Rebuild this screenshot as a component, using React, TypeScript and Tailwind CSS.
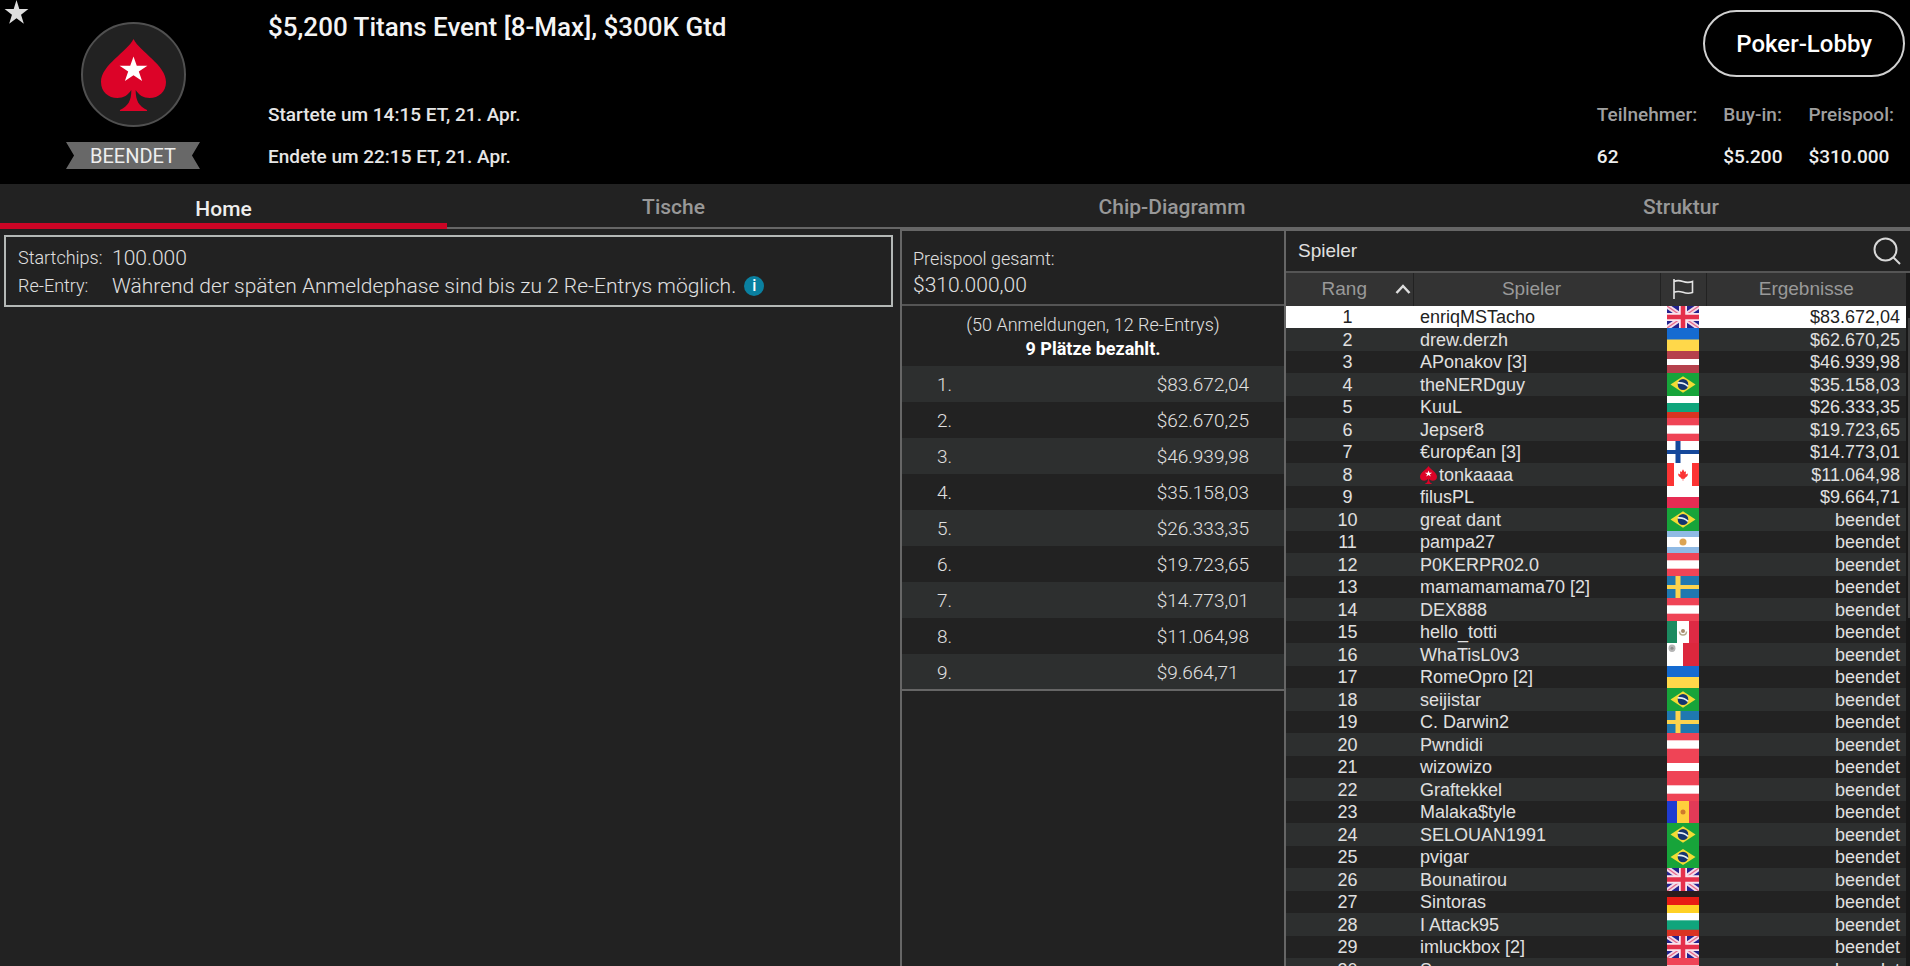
import React from 'react';

type FlagCode = 'gb' | 'ua' | 'lv' | 'br' | 'bg' | 'at' | 'fi' | 'ca' | 'pl' | 'ar' | 'se' | 'mx' | 'mt' | 'md' | 'de'

interface Player {
    name: string
    flag: FlagCode
    result?: string
    pro?: boolean
}

const Prizes = [
    '$83.672,04',
    '$62.670,25',
    '$46.939,98',
    '$35.158,03',
    '$26.333,35',
    '$19.723,65',
    '$14.773,01',
    '$11.064,98',
    '$9.664,71',
]

const Players: Player[] = [
    {name: 'enriqMSTacho', flag: 'gb', result: '$83.672,04'},
    {name: 'drew.derzh', flag: 'ua', result: '$62.670,25'},
    {name: 'APonakov [3]', flag: 'lv', result: '$46.939,98'},
    {name: 'theNERDguy', flag: 'br', result: '$35.158,03'},
    {name: 'KuuL', flag: 'bg', result: '$26.333,35'},
    {name: 'Jepser8', flag: 'at', result: '$19.723,65'},
    {name: '€urop€an [3]', flag: 'fi', result: '$14.773,01'},
    {name: 'tonkaaaa', flag: 'ca', result: '$11.064,98', pro: true},
    {name: 'filusPL', flag: 'pl', result: '$9.664,71'},
    {name: 'great dant', flag: 'br'},
    {name: 'pampa27', flag: 'ar'},
    {name: 'P0KERPR02.0', flag: 'at'},
    {name: 'mamamamama70 [2]', flag: 'se'},
    {name: 'DEX888', flag: 'at'},
    {name: 'hello_totti', flag: 'mx'},
    {name: 'WhaTisL0v3', flag: 'mt'},
    {name: 'RomeOpro [2]', flag: 'ua'},
    {name: 'seijistar', flag: 'br'},
    {name: 'C. Darwin2', flag: 'se'},
    {name: 'Pwndidi', flag: 'at'},
    {name: 'wizowizo', flag: 'at'},
    {name: 'Graftekkel', flag: 'at'},
    {name: 'Malaka$tyle', flag: 'md'},
    {name: 'SELOUAN1991', flag: 'br'},
    {name: 'pvigar', flag: 'br'},
    {name: 'Bounatirou', flag: 'gb'},
    {name: 'Sintoras', flag: 'de'},
    {name: 'I Attack95', flag: 'bg'},
    {name: 'imluckbox [2]', flag: 'gb'},
    {name: 'Sumon', flag: 'at'},
]

const StarPath = 'M0-1L.2245-.309L.951-.309L.363.118L.588.809L0 .382L-.588.809L-.363.118L-.951-.309L-.2245-.309Z'

const Bands = ({colors, stops}: { colors: string[], stops: number[] }) => (
    <>
        {colors.map((c, i) => (
            <rect key={i} width="32" y={stops[i]} height={22 - stops[i]} fill={c}/>
        ))}
    </>
)

const Columns = ({colors, stops}: { colors: string[], stops: number[] }) => (
    <>
        {colors.map((c, i) => (
            <rect key={i} height="22" x={stops[i]} width={32 - stops[i]} fill={c}/>
        ))}
    </>
)

const Cross = ({bg, fg}: { bg: string, fg: string }) => (
    <>
        <rect width="32" height="22" fill={bg}/>
        <path d="M8.500 0h5v22h-5zM0 9h32v4H0z" fill={fg}/>
    </>
)

// all drawn on a 32x22 field
const Flags: Record<FlagCode, React.ReactNode> = {
    gb: <>
        <rect width="32" height="22" fill="#23238f"/>
        <path d="M0 0L32 22M32 0L0 22" stroke="#f3dcea" strokeWidth="5"/>
        <path d="M0 0L32 22M32 0L0 22" stroke="#e86a8a" strokeWidth="1.300"/>
        <path d="M16 0v22M0 11h32" stroke="#f8e4ee" strokeWidth="8"/>
        <path d="M16 0v22M0 11h32" stroke="#e5304b" strokeWidth="4.500"/>
    </>,
    ua: <Bands colors={['#156bd1', '#ffd84a']} stops={[0, 11]}/>,
    lv: <Bands colors={['#b5404c', '#ffffff', '#b5404c']} stops={[0, 8, 14]}/>,
    br: <>
        <rect width="32" height="22" fill="#17a43a"/>
        <path d="M16 3L28.500 11L16 19L3.500 11Z" fill="#f2dc35"/>
        <circle cx="16" cy="11" r="5.300" fill="#15356f"/>
        <path d="M10.800 9.500Q17 8.800 21 12.800" stroke="#e8f0f4" strokeWidth="1.600" fill="none"/>
    </>,
    bg: <Bands colors={['#ffffff', '#10a57c', '#da3322']} stops={[0, 7, 16]}/>,
    at: <Bands colors={['#ef4456', '#ffffff', '#ef4456']} stops={[0, 7, 15]}/>,
    fi: <Cross bg="#ffffff" fg="#15489b"/>,
    ca: <>
        <Columns colors={['#fb3434', '#ffffff', '#fb3434']} stops={[0, 7, 25]}/>
        <path d="M16 6l1.500 2.500 1.500-.6-.3 3 2.300-.9-.6 2.400-2.800 2.200.1.700-1.400-.2v1.900h-.6v-1.900l-1.400.2.100-.7-2.800-2.200-.6-2.400 2.300.9-.3-3 1.500.6z" fill="#fb3434"/>
    </>,
    pl: <Bands colors={['#ffffff', '#e62c53']} stops={[0, 11]}/>,
    ar: <>
        <Bands colors={['#8fbae4', '#ffffff', '#8fbae4']} stops={[0, 6, 16]}/>
        <circle cx="16" cy="11" r="3.500" fill="#dba453"/>
    </>,
    se: <Cross bg="#1f78b0" fg="#fbd34e"/>,
    mx: <>
        <Columns colors={['#1c8a60', '#ffffff', '#de2a44']} stops={[0, 10, 22]}/>
        <path d="M12.500 10.500q0 3.500 3.500 3.500t3.500-3.500" stroke="#b5a88c" strokeWidth="1.500" fill="none"/>
        <circle cx="16" cy="10" r="2" fill="#a68a6c"/>
    </>,
    mt: <>
        <Columns colors={['#ffffff', '#dc273d']} stops={[0, 16]}/>
        <circle cx="5" cy="5" r="3.500" fill="#b5b5b5"/>
        <circle cx="5" cy="5" r="1.500" fill="#8d8d8d"/>
    </>,
    md: <>
        <Columns colors={['#1f3bd0', '#ffcf3c', '#e23a57']} stops={[0, 10, 22]}/>
        <circle cx="16" cy="11" r="2.500" fill="#cf7a2c"/>
    </>,
    de: <Bands colors={['#2a1c1c', '#e81c14', '#ffd124']} stops={[0, 6, 14]}/>,
}

const Spade = ({className}: { className: string }) => (
    <svg viewBox="0 0 60 72" className={className} preserveAspectRatio="none" aria-hidden="true">
        <path
            d="M30 0C24 13 0 26 0 43C0 53 7 59 15 59C21 59 25 56 28 51C28 62 25 67 17.500 71V72H42.500V71C35 67 32 62 32 51C35 56 39 59 45 59C53 59 60 53 60 43C60 26 36 13 30 0Z"
            fill="#dc0328"/>
        <path d={StarPath} transform="translate(30 31) scale(13.500)" fill="#fff"/>
    </svg>
)

const Header = () => (
    <header className="flex bg-black pb-1.5">
        <button className="self-start pl-1" aria-label="Favorit">
            <svg viewBox="-1 -1 2 1.900" className="h-[25px] w-[25px]" preserveAspectRatio="none">
                <path d={StarPath} fill="#dedede"/>
            </svg>
        </button>
        <div className="flex w-[208px] shrink-0 flex-col items-center pt-[22px]">
            <div className="flex h-[105px] w-[105px] items-center justify-center rounded-full border-2 border-[#505050] bg-[#222]">
                <Spade className="h-[72px] w-[65px]"/>
            </div>
            <span className="mt-[15px] h-[27px] w-[134px] bg-[#686868] text-center text-xl leading-7 text-[#eee] [clip-path:polygon(0_0,100%_0,94%_50%,100%_100%,0_100%,6%_50%)]">
                BEENDET
            </span>
        </div>
        <div className="grow pl-[31px] pt-2.5">
            <h1 className="text-[26px] font-medium leading-[34px] text-[#f4f4f4]">$5,200 Titans Event [8-Max], $300K Gtd</h1>
            <div className="mt-[50px] text-[19px] font-medium leading-[42px] text-[#e6e6e6]">
                <p>Startete um 14:15 ET, 21. Apr.</p>
                <p>Endete um 22:15 ET, 21. Apr.</p>
            </div>
        </div>
        <div className="flex flex-col items-end pr-[5px] pt-2.5">
            <button className="h-[67px] rounded-full border-2 border-[#d0d0d0] px-[31px] text-2xl font-medium text-white">
                Poker-Lobby
            </button>
            <dl className="mt-[17px] flex gap-[26px] pr-[11px] text-[19px] font-medium leading-[42px]">
                <div>
                    <dt className="text-[#9f9f9f]">Teilnehmer:</dt>
                    <dd className="text-[#eee]">62</dd>
                </div>
                <div>
                    <dt className="text-[#9f9f9f]">Buy-in:</dt>
                    <dd className="text-[#eee]">$5.200</dd>
                </div>
                <div>
                    <dt className="text-[#9f9f9f]">Preispool:</dt>
                    <dd className="text-[#eee]">$310.000</dd>
                </div>
            </dl>
        </div>
    </header>
)

const Tabs = () => (
    <nav className="grid h-[45px] shrink-0 grid-cols-[447fr_453fr_544fr_466fr] text-[21px] font-medium leading-7 text-[#989898]">
        <button className="border-b-6 border-[#cb0525] pt-2.5 text-[#eee]">Home</button>
        <button className="border-b-2 border-[#666] pt-0.5">Tische</button>
        <button className="border-b-2 border-[#666] pt-0.5">Chip-Diagramm</button>
        <button className="border-b-2 border-[#666] pl-2 pt-0.5">Struktur</button>
    </nav>
)

const Info = () => (
    <section className="pl-1 pr-[7px] pt-1.5">
        <dl className="grid grid-cols-[94px_1fr] border-2 border-[#b4b8b6] pb-[5px] pl-3 pt-[7px] font-light leading-7">
            <dt className="text-lg leading-7">Startchips:</dt>
            <dd className="text-[21px] leading-7">100.000</dd>
            <dt className="text-lg leading-7">Re-Entry:</dt>
            <dd className="flex items-center gap-2 text-[21px] leading-7">
                Während der späten Anmeldephase sind bis zu 2 Re-Entrys möglich.
                <button className="h-5 w-5 rounded-full bg-[#0a80a0] text-base font-medium leading-5 text-white">i</button>
            </dd>
        </dl>
    </section>
)

const PrizePool = () => (
    <section className="border-x-2 border-t-2 border-[#666] font-light">
        <div className="border-b-2 border-[#555] pb-1.5 pl-[11px] pt-3.5">
            <p className="text-lg leading-[27px]">Preispool gesamt:</p>
            <p className="text-[21px] leading-[26px]">$310.000,00</p>
        </div>
        <div className="pb-[5px] pt-[7px] text-center text-lg leading-6">
            <p>(50 Anmeldungen, 12 Re-Entrys)</p>
            <p className="font-bold text-white">9 Plätze bezahlt.</p>
        </div>
        <table className="w-full border-b-2 border-[#666] text-[19px] leading-7">
            <tbody>
            {Prizes.map((amount, i) => (
                <tr key={amount} className="h-9 odd:bg-[#2d2f2f]">
                    <td className="w-2/3 pl-[35px] pt-0.5">{i + 1}.</td>
                    <td className="pt-0.5">{amount}</td>
                </tr>
            ))}
            </tbody>
        </table>
    </section>
)

const PlayerRow = ({player, rank}: { player: Player, rank: number }) => {
    const selected = rank === 1
    const height = rank % 2 ? 'h-[22px]' : 'h-[23px]'

    return (
        <tr className={selected ? 'bg-white text-[#222]' : 'even:bg-[#2d2f2f]'}>
            <td className="pr-1 text-center">{rank}</td>
            <td className="pl-[7px]">
                <span className="flex items-center gap-0.5">
                    {player.pro && <Spade className="h-[18px] w-[17px]"/>}
                    {player.name}
                </span>
            </td>
            <td>
                <svg viewBox="0 0 32 22" preserveAspectRatio="none" className={`mx-auto block w-8 ${height}`}
                     role="img" aria-label={player.flag}>
                    {Flags[player.flag]}
                </svg>
            </td>
            <td className="pr-1.5 text-right">{player.result ?? 'beendet'}</td>
        </tr>
    )
}

const PlayerList = () => (
    <section className="flex min-h-0 flex-col overflow-hidden border-t-2 border-[#666] font-['Liberation_Sans',Arial,sans-serif]">
        <div className="flex h-[42px] shrink-0 items-center justify-between border-b-2 border-[#555] pl-3 pr-[9px] text-[19px]">
            <h2>Spieler</h2>
            <button aria-label="Suchen">
                <svg viewBox="0 0 28 28" className="h-7 w-7" fill="none" stroke="#d8d8d8" strokeWidth="2">
                    <circle cx="12.500" cy="12.500" r="11"/>
                    <path d="M20 20L27 27"/>
                </svg>
            </button>
        </div>
        <div className="flex min-h-0 grow">
            <table className="w-full table-fixed self-start text-lg leading-[22px]">
                <colgroup>
                    <col className="w-[127px]"/>
                    <col/>
                    <col className="w-[46px]"/>
                    <col className="w-[200px]"/>
                </colgroup>
                <thead>
                <tr className="h-[33px] bg-[#333] text-[19px] text-[#999]">
                    <th className="border-r border-[#222] pb-0.5 font-normal">
                        <button className="flex w-full items-center pl-2 pr-0.5">
                            <span className="grow">Rang</span>
                            <svg viewBox="0 0 16 10" className="h-2.5 w-4" fill="none" stroke="#ddd" strokeWidth="2.500">
                                <path d="M1.500 9L8 2L14.500 9"/>
                            </svg>
                        </button>
                    </th>
                    <th className="border-r border-[#222] pb-0.5 pr-2.5 font-normal">Spieler</th>
                    <th className="border-r border-[#222] pb-0.5">
                        <svg viewBox="0 0 22 20" className="mx-auto h-5 w-[22px]" fill="none" stroke="#e4e4e4" strokeWidth="1.600" role="img" aria-label="Land">
                            <path d="M2 0V20M2 2.500Q6 .8 11 2.500T20.500 2.500V13.500Q16 15 11 13.300T2 13.300"/>
                        </svg>
                    </th>
                    <th className="pb-0.5 font-normal">Ergebnisse</th>
                </tr>
                </thead>
                <tbody>
                {Players.map((player, i) => (
                    <PlayerRow key={player.name} player={player} rank={i + 1}/>
                ))}
                </tbody>
            </table>
            <div className="w-1 shrink-0 bg-[#181818] pl-0.5 pt-[45px]">
                <div className="h-[300px] bg-[#3c3c3c]"/>
            </div>
        </div>
    </section>
)

const App = () => (
    <div className="flex h-screen flex-col overflow-hidden bg-[#222] font-[Roboto,sans-serif] text-[#e0e0e0]">
        <Header/>
        <Tabs/>
        <main className="grid min-h-0 grow grid-cols-[900fr_386fr_624fr]">
            <Info/>
            <PrizePool/>
            <PlayerList/>
        </main>
    </div>
)

export default App;
